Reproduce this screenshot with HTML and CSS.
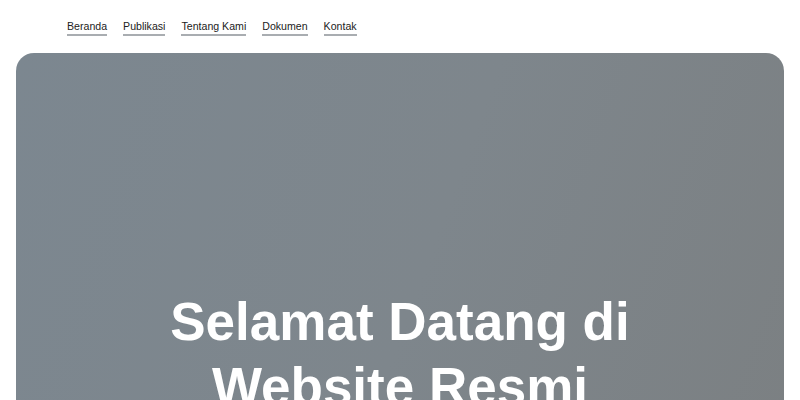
FILE: index.html
```html
<!DOCTYPE html>
<html lang="id">
<head>
<meta charset="utf-8">
<title>Website Resmi</title>
<link rel="stylesheet" href="styles.css">
</head>
<body>
<header class="site-header">
  <nav class="nav">
    <a class="nav-link" href="#">Beranda</a>
    <a class="nav-link" href="#">Publikasi</a>
    <a class="nav-link" href="#">Tentang Kami</a>
    <a class="nav-link" href="#">Dokumen</a>
    <a class="nav-link" href="#">Kontak</a>
  </nav>
</header>
<main class="main">
  <section class="hero">
    <h1 class="hero-title">Selamat Datang di Website Resmi</h1>
  </section>
</main>
</body>
</html>
```
FILE: styles.css
```css
* { box-sizing: border-box; }
html, body { margin: 0; padding: 0; background: #fff; }
body { font-family: "Liberation Sans", Arial, sans-serif; color: #222; }

.site-header { padding: 19px 67px 0; height: 53px; }
.nav { display: flex; gap: 16px; }
.nav-link {
  font-size: 10.6px;
  line-height: 14px;
  color: #222;
  text-decoration: none;
  border-bottom: 2px solid #a9adb1;
  padding-bottom: 1px;
}

.main { padding: 0 16px; }
.hero {
  height: 560px;
  border-radius: 18px;
  background: linear-gradient(110deg, #7c8790 0%, #7e868c 50%, #7b7f81 100%);
  display: flex;
  justify-content: center;
  padding-top: 236px;
}
.hero-title {
  margin: 0;
  width: 560px;
  text-align: center;
  color: #fff;
  font-size: 53px;
  line-height: 65px;
  font-weight: 700;
}
```
